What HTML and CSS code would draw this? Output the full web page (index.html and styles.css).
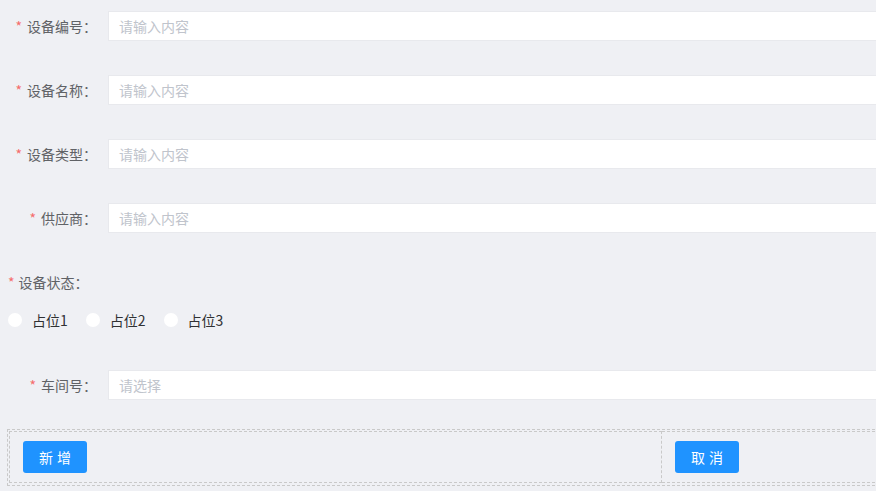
FILE: index.html
```html
<!DOCTYPE html>
<html lang="zh-CN">
<head>
<meta charset="utf-8">
<link rel="stylesheet" href="styles.css">
</head>
<body>
<form class="form">
  <div class="item">
    <label class="label"><span class="req">*</span>设备编号：</label>
    <div class="input"><span class="ph">请输入内容</span></div>
  </div>
  <div class="item">
    <label class="label"><span class="req">*</span>设备名称：</label>
    <div class="input"><span class="ph">请输入内容</span></div>
  </div>
  <div class="item">
    <label class="label"><span class="req">*</span>设备类型：</label>
    <div class="input"><span class="ph">请输入内容</span></div>
  </div>
  <div class="item">
    <label class="label"><span class="req">*</span>供应商：</label>
    <div class="input"><span class="ph">请输入内容</span></div>
  </div>
  <div class="item item-top">
    <label class="label-top"><span class="req">*</span>设备状态：</label>
    <div class="radios">
      <label class="radio"><span class="circle"></span>占位1</label>
      <label class="radio"><span class="circle"></span>占位2</label>
      <label class="radio"><span class="circle"></span>占位3</label>
    </div>
  </div>
  <div class="item item-last">
    <label class="label"><span class="req">*</span>车间号：</label>
    <div class="input"><span class="ph">请选择</span></div>
  </div>
  <div class="actions">
    <div class="cell"><button type="button" class="btn">新增</button></div>
    <div class="cell"><button type="button" class="btn">取消</button></div>
  </div>
</form>
</body>
</html>
```

FILE: styles.css
```css
html, body {
  margin: 0;
  padding: 0;
  background: #eff0f4;
  overflow: hidden;
}
body {
  font-family: "Noto Sans CJK SC", "Noto Sans", sans-serif;
  font-size: 14px;
  color: #606266;
}
.form {
  padding: 11px 0 0 8px;
}
.item {
  display: flex;
  align-items: center;
  height: 30px;
  margin-bottom: 34px;
}
.label {
  width: 100px;
  flex: none;
  text-align: right;
  padding-right: 11px;
  box-sizing: border-box;
  line-height: 30px;
  color: #606266;
  white-space: nowrap;
}
.req {
  color: #f56c6c;
  margin-right: 5px;
}
.input {
  width: 900px;
  flex: none;
  height: 30px;
  box-sizing: border-box;
  background: #fff;
  border: 1px solid #e8e9ed;
  border-right: none;
  padding-left: 10px;
  line-height: 28px;
}
.ph {
  color: #c0c4cc;
}
.item-top {
  display: block;
  height: auto;
}
.label-top {
  display: block;
  line-height: 30px;
  margin-bottom: 8px;
}
.label-top .req {
  margin-right: 4px;
}
.radios {
  display: flex;
  align-items: center;
  height: 30px;
}
.radio {
  display: flex;
  align-items: center;
  color: #303133;
  margin-right: 18px;
}
.circle {
  width: 14px;
  height: 14px;
  border-radius: 50%;
  background: #fff;
  margin-right: 10px;
}
.item-last {
  margin-top: 35px;
  margin-bottom: 29px;
}
.actions {
  display: grid;
  grid-template-columns: 653px 653px;
  border: 1px dashed #c9c9c9;
  margin-left: -1px;
  padding: 1px 0 2px 1px;
  width: 1400px;
}
.cell {
  border: 1px dashed #c9c9c9;
  padding: 9px 12px 9px 13px;
}
.cell + .cell {
  border-left: none;
}
.btn {
  width: 64px;
  height: 32px;
  border: none;
  border-radius: 3px;
  background: #1f93ff;
  color: #fff;
  font-family: "Noto Sans CJK SC", sans-serif;
  font-size: 14px;
  letter-spacing: 4px;
  text-indent: 4px;
  padding: 0;
  display: block;
}
```
